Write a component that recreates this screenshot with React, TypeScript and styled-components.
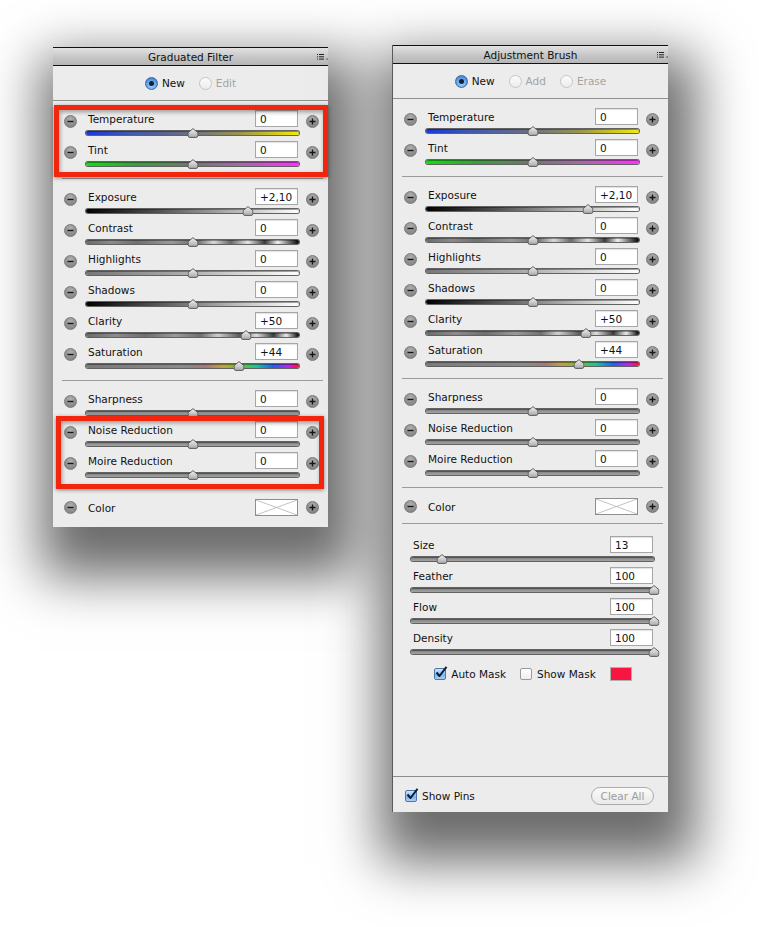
import styled, { createGlobalStyle } from 'styled-components';

type Track =
    | 'temperature'
    | 'tint'
    | 'exposure'
    | 'contrast'
    | 'highlights'
    | 'shadows'
    | 'clarity'
    | 'saturation'
    | 'neutral';

type Adjustment = { label: string; value: string; track: Track; pos: number };

const TRACKS: Record<Track, string> = {
    temperature: 'linear-gradient(90deg, #1838e0 0%, #4058b0 20%, #6a6e86 48%, #9a9450 72%, #f4ec00 100%)',
    tint: 'linear-gradient(90deg, #10e010 0%, #3aa03a 22%, #6e766e 48%, #a868a8 74%, #ff30ff 100%)',
    exposure: 'linear-gradient(90deg, #000 0%, #555 35%, #aaa 65%, #fff 100%)',
    contrast:
        'linear-gradient(90deg, #6a6a6a 0%, #8a8a8a 12%, #707070 24%, #9a9a9a 40%, #6a6a6a 52%, #d8d8d8 60%, #6a6a6a 68%, #e4e4e4 76%, #3a3a3a 84%, #f0f0f0 90%, #000 100%)',
    highlights: 'linear-gradient(90deg, #777 0%, #aaa 45%, #fff 100%)',
    shadows: 'linear-gradient(90deg, #000 0%, #666 40%, #bbb 70%, #fff 100%)',
    clarity:
        'linear-gradient(90deg, #6a6a6a 0%, #8c8c8c 14%, #6e6e6e 28%, #9a9a9a 42%, #707070 54%, #cfcfcf 62%, #5a5a5a 72%, #dedede 80%, #3a3a3a 88%, #eaeaea 94%, #000 100%)',
    saturation:
        'linear-gradient(90deg, #7a7a7a 0%, #8a8a8a 45%, #a07a7a 56%, #c0a040 64%, #70c030 72%, #20c0a0 80%, #2060f0 88%, #c020f0 95%, #ff1030 100%)',
    neutral: 'linear-gradient(#7c7c7c, #a4a4a4)',
};

const TONE: Adjustment[] = [
    { label: 'Temperature', value: '0', track: 'temperature', pos: 0.5 },
    { label: 'Tint', value: '0', track: 'tint', pos: 0.5 },
];

const LIGHT: Adjustment[] = [
    { label: 'Exposure', value: '+2,10', track: 'exposure', pos: 0.76 },
    { label: 'Contrast', value: '0', track: 'contrast', pos: 0.5 },
    { label: 'Highlights', value: '0', track: 'highlights', pos: 0.5 },
    { label: 'Shadows', value: '0', track: 'shadows', pos: 0.5 },
    { label: 'Clarity', value: '+50', track: 'clarity', pos: 0.75 },
    { label: 'Saturation', value: '+44', track: 'saturation', pos: 0.72 },
];

const SHARP: Adjustment = { label: 'Sharpness', value: '0', track: 'neutral', pos: 0.5 };

const NOISE: Adjustment[] = [
    { label: 'Noise Reduction', value: '0', track: 'neutral', pos: 0.5 },
    { label: 'Moire Reduction', value: '0', track: 'neutral', pos: 0.5 },
];

const BRUSH = [
    { label: 'Size', value: '13', pos: 0.128 },
    { label: 'Feather', value: '100', pos: 1 },
    { label: 'Flow', value: '100', pos: 1 },
    { label: 'Density', value: '100', pos: 1 },
];

export default function App() {
    return (
        <>
            <GlobalStyle />
            <Page>
                <Panel $top={2}>
                    <TitleBar>
                        Graduated Filter
                        <MenuIcon />
                    </TitleBar>
                    <RadioRow>
                        <Radio label="New" checked />
                        <Radio label="Edit" />
                    </RadioRow>
                    <Group>
                        <Highlight $inset="-5px 0 -5px 1px">
                            {TONE.map((a) => <AdjustRow key={a.label} {...a} />)}
                        </Highlight>
                    </Group>
                    <Separator />
                    <Group>
                        {LIGHT.map((a) => <AdjustRow key={a.label} {...a} />)}
                    </Group>
                    <Separator />
                    <Group>
                        <AdjustRow {...SHARP} />
                        <Highlight $inset="-5px 4px -6px 3px">
                            {NOISE.map((a) => <AdjustRow key={a.label} {...a} />)}
                        </Highlight>
                    </Group>
                    <Group $bottom={10}>
                        <ColorRow />
                    </Group>
                </Panel>

                <Panel $edge $height={767}>
                    <TitleBar>
                        Adjustment Brush
                        <MenuIcon />
                    </TitleBar>
                    <RadioRow>
                        <Radio label="New" checked />
                        <Radio label="Add" />
                        <Radio label="Erase" />
                    </RadioRow>
                    <Group>
                        {TONE.map((a) => <AdjustRow key={a.label} {...a} />)}
                    </Group>
                    <Separator />
                    <Group>
                        {LIGHT.map((a) => <AdjustRow key={a.label} {...a} />)}
                    </Group>
                    <Separator />
                    <Group>
                        <AdjustRow {...SHARP} />
                        {NOISE.map((a) => <AdjustRow key={a.label} {...a} />)}
                    </Group>
                    <Separator />
                    <Group $bottom={7}>
                        <ColorRow />
                    </Group>
                    <Separator />
                    <BrushGroup>
                        {BRUSH.map((b) => (
                            <BrushRow key={b.label}>
                                <TopLine>
                                    <Label>{b.label}</Label>
                                    <ValueBox>{b.value}</ValueBox>
                                </TopLine>
                                <Slider track="neutral" pos={b.pos} />
                            </BrushRow>
                        ))}
                        <MaskRow>
                            <CheckItem>
                                <Checkbox checked />
                                Auto Mask
                            </CheckItem>
                            <CheckItem>
                                <Checkbox />
                                Show Mask
                            </CheckItem>
                            <Swatch />
                        </MaskRow>
                    </BrushGroup>
                    <Footer>
                        <CheckItem>
                            <Checkbox checked />
                            Show Pins
                        </CheckItem>
                        <PillButton>Clear All</PillButton>
                    </Footer>
                </Panel>
            </Page>
        </>
    );
}

const AdjustRow = ({ label, value, track, pos }: Adjustment) => (
    <Row>
        <RoundButton><Glyph /></RoundButton>
        <Body>
            <TopLine>
                <Label>{label}</Label>
                <ValueBox>{value}</ValueBox>
            </TopLine>
            <Slider track={track} pos={pos} />
        </Body>
        <RoundButton $plus><Glyph plus /></RoundButton>
    </Row>
);

const ColorRow = () => (
    <ColorLine>
        <RoundButton $flat><Glyph /></RoundButton>
        <ColorBody>
            <Label>Color</Label>
            <ColorBox>
                <svg width="41" height="15" viewBox="0 0 41 15">
                    <path d="M0 0 L41 15 M41 0 L0 15" stroke="#b4b4b4" strokeWidth="0.8" />
                </svg>
            </ColorBox>
        </ColorBody>
        <RoundButton $plus $flat><Glyph plus /></RoundButton>
    </ColorLine>
);

const Slider = ({ track, pos }: { track: Track; pos: number }) => (
    <SliderWrap>
        <TrackBar $track={track} />
        <Thumb style={{ left: `${pos * 100}%` }}>
            <svg width="11" height="10" viewBox="0 0 11 10">
                <defs>
                    <linearGradient id="thumbfill" x1="0" y1="0" x2="0" y2="1">
                        <stop offset="0" stopColor="#f2f2f2" />
                        <stop offset="1" stopColor="#a9a9a9" />
                    </linearGradient>
                </defs>
                <path
                    d="M5.5 0.6 L10.4 4.6 L10.4 7.6 Q10.4 9.4 8.6 9.4 L2.4 9.4 Q0.6 9.4 0.6 7.6 L0.6 4.6 Z"
                    fill="url(#thumbfill)"
                    stroke="#4e4e4e"
                    strokeWidth="0.9"
                />
            </svg>
        </Thumb>
    </SliderWrap>
);

const Glyph = ({ plus }: { plus?: boolean }) => (
    <svg width="9" height="9" viewBox="0 0 9 9">
        <path d={plus ? 'M1.5 4.5 H7.5 M4.5 1.5 V7.5' : 'M1.5 4.5 H7.5'} stroke="#161616" strokeWidth="1.4" />
    </svg>
);

const Radio = ({ label, checked }: { label: string; checked?: boolean }) => (
    <RadioItem $disabled={!checked}>
        <RadioDot $checked={checked} />
        {label}
    </RadioItem>
);

const Checkbox = ({ checked }: { checked?: boolean }) => (
    <Box $checked={checked}>
        {checked && (
            <svg width="14" height="14" viewBox="0 0 14 14">
                <path d="M2.5 6.5 L5.5 10 L12.5 0.8" fill="none" stroke="#0d1b3a" strokeWidth="2" strokeLinejoin="round" />
            </svg>
        )}
    </Box>
);

const MenuIcon = () => (
    <MenuMark>
        <svg width="11" height="6" viewBox="0 0 11 6">
            <path d="M0 0.5 H1 M2 0.5 H7 M0 2.8 H1 M2 2.8 H7 M0 5.1 H1 M2 5.1 H7" stroke="#222" strokeWidth="1" />
            <rect x="9.5" y="4.5" width="1.2" height="1.2" fill="#333" />
        </svg>
    </MenuMark>
);

const GlobalStyle = createGlobalStyle`
  html, body {
    margin: 0;
    background: #ffffff;
  }
  body {
    font-family: "DejaVu Sans", "Liberation Sans", sans-serif;
    font-size: 10.5px;
    color: #111;
  }
`;

const Page = styled.div`
  display: flex;
  align-items: flex-start;
  gap: 64px;
  padding: 45px 0 0 53px;
  min-height: 927px;
  box-sizing: border-box;
  overflow: hidden;
`;

const Panel = styled.div<{ $top?: number; $edge?: boolean; $height?: number }>`
  position: relative;
  display: flex;
  flex-direction: column;
  width: 275px;
  height: ${(p) => (p.$height ? `${p.$height}px` : 'auto')};
  margin-top: ${(p) => p.$top ?? 0}px;
  background: #edecec;
  border-left: ${(p) => (p.$edge ? '1px solid #5a5a5a' : 'none')};
  box-shadow: 8px 30px 50px 20px rgba(0, 0, 0, 0.58);
`;

const TitleBar = styled.div`
  position: relative;
  height: 17px;
  display: flex;
  align-items: center;
  justify-content: center;
  border-top: 1px solid #111;
  border-bottom: 1px solid #111;
  background: linear-gradient(#e2e2e2, #c6c6c6 55%, #b6b6b6);
  color: #111;
  font-size: 10.5px;
`;

const MenuMark = styled.span`
  position: absolute;
  right: 0;
  top: 6px;
  display: flex;
`;

const RadioRow = styled.div`
  height: 34px;
  display: flex;
  align-items: center;
  justify-content: center;
  gap: 14px;
  border-bottom: 1px solid #8f8f8f;
`;

const RadioItem = styled.label<{ $disabled?: boolean }>`
  display: flex;
  align-items: center;
  gap: 4px;
  color: ${(p) => (p.$disabled ? '#a3a3a3' : '#111')};
`;

const RadioDot = styled.span<{ $checked?: boolean }>`
  width: 13px;
  height: 13px;
  box-sizing: border-box;
  border-radius: 50%;
  display: flex;
  align-items: center;
  justify-content: center;
  border: 1px solid ${(p) => (p.$checked ? '#3a68a8' : '#c6c6c6')};
  background: ${(p) =>
        p.$checked
            ? 'radial-gradient(circle at 50% 70%, #a8d4fa, #5b9be0 60%, #2f6fc0)'
            : 'linear-gradient(#fbfbfb, #ececec)'};
  &::after {
    content: '';
    display: ${(p) => (p.$checked ? 'block' : 'none')};
    width: 5px;
    height: 5px;
    border-radius: 50%;
    background: #13203a;
  }
`;

const Separator = styled.div`
  height: 1px;
  margin: 0 5px 0 9px;
  background: #9b9b9b;
  flex-shrink: 0;
`;

const Group = styled.div<{ $bottom?: number }>`
  padding: 9px 0 ${(p) => p.$bottom ?? 6}px;
`;

const Highlight = styled.div<{ $inset: string }>`
  position: relative;
  &::after {
    content: '';
    position: absolute;
    inset: ${(p) => p.$inset};
    border: 5px solid #f2260c;
    box-shadow: 0 1px 4px rgba(0, 0, 0, 0.45), inset 1px 2px 4px rgba(0, 0, 0, 0.35);
    pointer-events: none;
  }
`;

const Row = styled.div`
  height: 31px;
  display: flex;
  align-items: flex-start;
  padding-left: 12px;
`;

const RoundButton = styled.span<{ $plus?: boolean; $flat?: boolean }>`
  width: 13px;
  height: 13px;
  flex-shrink: 0;
  margin-top: ${(p) => (p.$flat ? 0 : 5)}px;
  margin-left: ${(p) => (p.$plus ? 7 : -1)}px;
  border-radius: 50%;
  box-sizing: border-box;
  border: 1px solid #787878;
  background: radial-gradient(circle at 50% 30%, #b0b0b0, #8e8e8e 60%, #7e7e7e);
  display: flex;
  align-items: center;
  justify-content: center;
`;

const Body = styled.div`
  width: 213px;
  margin-left: 9px;
  display: flex;
  flex-direction: column;
`;

const TopLine = styled.div`
  height: 17px;
  display: flex;
  align-items: center;
  justify-content: space-between;
`;

const Label = styled.span`
  padding-left: 2px;
  color: #111;
  white-space: nowrap;
`;

const ValueBox = styled.div`
  width: 43px;
  height: 17px;
  margin-right: 1px;
  box-sizing: border-box;
  padding: 0 0 0 4px;
  display: flex;
  align-items: center;
  background: #fff;
  border: 1px solid #a6a6a6;
  box-shadow: inset 0 1px 1px rgba(0, 0, 0, 0.12);
  color: #111;
`;

const SliderWrap = styled.div`
  position: relative;
  height: 14px;
  padding-top: 4px;
  box-sizing: border-box;
`;

const TrackBar = styled.div<{ $track: Track }>`
  height: 4px;
  border-radius: 2px;
  background: ${(p) => TRACKS[p.$track]};
  box-shadow: 0 0 0 1px rgba(40, 40, 40, 0.7), inset 0 1px 0 rgba(0, 0, 0, 0.35);
`;

const Thumb = styled.span`
  position: absolute;
  top: 1px;
  transform: translateX(-50%);
  display: flex;
`;

const ColorLine = styled.div`
  height: 19px;
  display: flex;
  align-items: center;
  padding-left: 12px;
`;

const ColorBody = styled.div`
  width: 213px;
  margin-left: 9px;
  display: flex;
  align-items: center;
  justify-content: space-between;
`;

const ColorBox = styled.div`
  width: 43px;
  height: 17px;
  margin-right: 1px;
  box-sizing: border-box;
  border: 1px solid #8e8e8e;
  background: #fff;
  display: flex;
`;

const BrushGroup = styled.div`
  padding-top: 12px;
`;

const BrushRow = styled.div`
  height: 31px;
  display: flex;
  flex-direction: column;
  padding: 0 14px 0 18px;
`;

const MaskRow = styled.div`
  margin-top: 6px;
  height: 16px;
  display: flex;
  align-items: center;
  justify-content: center;
  gap: 14px;
  padding-left: 5px;
`;

const CheckItem = styled.label`
  display: flex;
  align-items: center;
  gap: 5px;
  color: #111;
`;

const Box = styled.span<{ $checked?: boolean }>`
  position: relative;
  width: 12px;
  height: 12px;
  box-sizing: border-box;
  border-radius: 2px;
  border: 1px solid ${(p) => (p.$checked ? '#4d76aa' : '#9a9a9a')};
  background: ${(p) => (p.$checked ? 'linear-gradient(#cfe6fb, #7db6ec 60%, #a9d2f6)' : 'linear-gradient(#ffffff, #eeeeee)')};
  svg {
    position: absolute;
    left: -1px;
    top: -3px;
  }
`;

const Swatch = styled.span`
  width: 22px;
  height: 14px;
  background: #f7163f;
  border: 1px solid #b0b0b0;
  box-sizing: border-box;
`;

const Footer = styled.div`
  margin-top: auto;
  height: 36px;
  box-sizing: border-box;
  padding: 2px 14px 0 12px;
  display: flex;
  align-items: center;
  justify-content: space-between;
  border-top: 1px solid #8c8c8c;
`;

const PillButton = styled.button`
  width: 63px;
  height: 18px;
  border-radius: 9px;
  border: 1px solid #ababab;
  background: linear-gradient(#fbfbfb, #e9e9e9);
  color: #9c9c9c;
  font-family: inherit;
  font-size: 10.5px;
  padding: 0;
`;
